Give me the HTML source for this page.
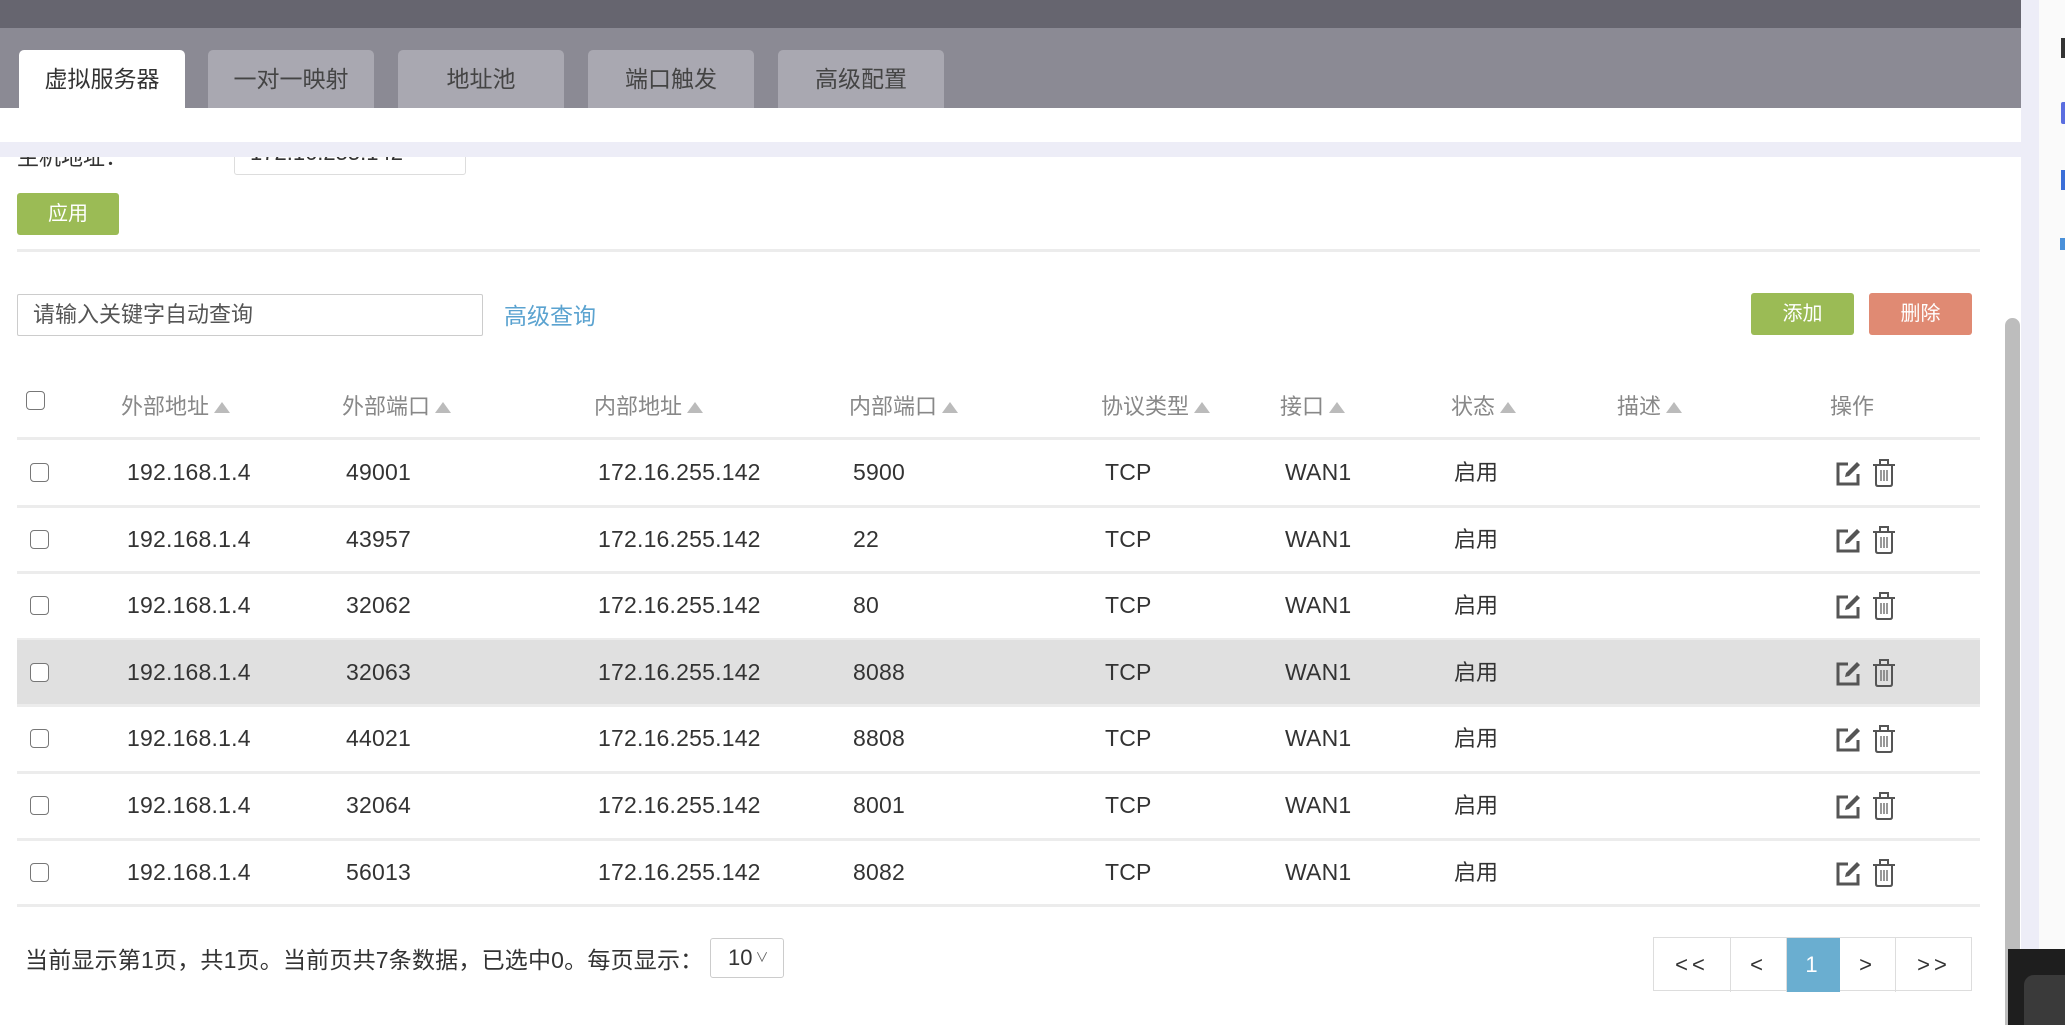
<!DOCTYPE html>
<html><head><meta charset="utf-8"><style>
*{margin:0;padding:0;box-sizing:border-box}
body{width:2065px;height:1025px;overflow:hidden;background:#fff;position:relative;font-family:"Liberation Sans","Noto Sans CJK SC",sans-serif;color:#333}
.a{position:absolute}
.tab{position:absolute;top:50px;height:58px;width:166px;background:#a9a8b1;border-radius:5px 5px 0 0;font-size:23px;color:#444;text-align:center;line-height:58px}
.t{position:absolute;font-size:22px;white-space:nowrap}
.h{color:#888;font-size:22px}
.tri{display:inline-block;width:0;height:0;border-left:8px solid transparent;border-right:8px solid transparent;border-bottom:11px solid #bbb;margin-left:5px;vertical-align:1px}
.cb{position:absolute;width:19px;height:19px;border:1.5px solid #777;border-radius:4px;background:#fff}
.line{position:absolute;left:17px;width:1963px;height:3px;background:#ececec}
.pg{position:absolute;top:0;height:54px;border-right:1px solid #ddd;text-align:center;line-height:54px;font-size:22px;color:#333;letter-spacing:4px}
</style></head><body>
<div class="a" style="left:0;top:0;width:2021px;height:28px;background:#66656f"></div>
<div class="a" style="left:0;top:28px;width:2021px;height:80px;background:#8b8a94"></div>
<div class="tab" style="left:19px;background:#fff;color:#333">虚拟服务器</div>
<div class="tab" style="left:208px">一对一映射</div>
<div class="tab" style="left:398px">地址池</div>
<div class="tab" style="left:588px">端口触发</div>
<div class="tab" style="left:778px">高级配置</div>

<div class="t" style="left:17px;top:140px;color:#333">主机地址：</div>
<div class="t" style="left:152px;top:140px;color:#c00">*</div>
<div class="a" style="left:234px;top:130px;width:232px;height:45px;border:1px solid #ddd;border-radius:3px;background:#fff"></div>
<div class="t" style="left:250px;top:140px;">172.16.255.142</div>
<div class="a" style="left:0;top:108px;width:2021px;height:34px;background:#fff"></div>
<div class="a" style="left:0;top:142px;width:2021px;height:15px;background:#ededf7"></div>

<div class="a" style="left:17px;top:193px;width:102px;height:42px;background:#9bbb55;border-radius:3px;color:#fff;font-size:20px;text-align:center;line-height:42px">应用</div>
<div class="line" style="top:249px"></div>

<div class="a" style="left:17px;top:294px;width:466px;height:42px;border:1px solid #ccc;border-radius:2px;font-size:22px;color:#555;line-height:40px;padding-left:15px">请输入关键字自动查询</div>
<div class="t" style="left:504px;top:297px;color:#5ba3d0;font-size:23px">高级查询</div>
<div class="a" style="left:1751px;top:293px;width:103px;height:42px;background:#9bbb55;border-radius:3px;color:#fff;font-size:20px;text-align:center;line-height:42px">添加</div>
<div class="a" style="left:1869px;top:293px;width:103px;height:42px;background:#e08a73;border-radius:3px;color:#fff;font-size:20px;text-align:center;line-height:42px">删除</div>

<div class="cb" style="left:26px;top:391px"></div>
<div class="t h" style="left:121px;top:389px">外部地址<span class="tri"></span></div>
<div class="t h" style="left:342px;top:389px">外部端口<span class="tri"></span></div>
<div class="t h" style="left:594px;top:389px">内部地址<span class="tri"></span></div>
<div class="t h" style="left:849px;top:389px">内部端口<span class="tri"></span></div>
<div class="t h" style="left:1101px;top:389px">协议类型<span class="tri"></span></div>
<div class="t h" style="left:1280px;top:389px">接口<span class="tri"></span></div>
<div class="t h" style="left:1451px;top:389px">状态<span class="tri"></span></div>
<div class="t h" style="left:1617px;top:389px">描述<span class="tri"></span></div>
<div class="t h" style="left:1830px;top:389px">操作</div>
<div class="line" style="top:437px"></div>

<div id="rows"></div>
<script>
var d=[["49001","5900"],["43957","22"],["32062","80"],["32063","8088"],["44021","8808"],["32064","8001"],["56013","8082"]];
var h="";
for(var i=0;i<7;i++){var y=440+i*66.6;var c=y+33;
if(i==3)h+='<div class="a" style="left:17px;top:'+(y)+'px;width:1963px;height:66px;background:#e0e0e0"></div>';
h+='<div class="cb" style="left:30px;top:'+(c-10)+'px"></div>';
var cols=[[127,"192.168.1.4"],[346,d[i][0]],[598,"172.16.255.142"],[853,d[i][1]],[1105,"TCP"],[1285,"WAN1"]];
for(var j=0;j<cols.length;j++)h+='<div class="t" style="left:'+cols[j][0]+'px;top:'+(c-14)+'px;font-size:23px;letter-spacing:0.2px">'+cols[j][1]+'</div>';
h+='<div class="t" style="left:1454px;top:'+(c-18)+'px;font-size:22px">启用</div>';
h+='<svg class="a" style="left:1834px;top:'+(c-13)+'px" width="28" height="28" viewBox="0 0 28 28"><path d="M14 4H4v20h20V14" fill="none" stroke="#555" stroke-width="3"/><path d="M11 17l1-4 11-11 3 3-11 11z" fill="#555"/></svg>';
h+='<svg class="a" style="left:1871px;top:'+(c-15)+'px" width="26" height="30" viewBox="0 0 26 30"><path d="M9 6V2h8v4M2 7h22M5 7v19q0 2 2 2h12q2 0 2-2V7" fill="none" stroke="#555" stroke-width="2"/><path d="M10 12v11M13 12v11M16 12v11" stroke="#777" stroke-width="1.5"/></svg>';
h+='<div class="line" style="top:'+(y+64.5)+'px"></div>';}
document.getElementById("rows").innerHTML=h;
</script>

<div class="t" style="left:25px;top:941px;font-size:23px;letter-spacing:0.2px">当前显示第1页，共1页。当前页共7条数据，已选中0。每页显示：</div>
<div class="a" style="left:710px;top:938px;width:74px;height:40px;border:1px solid #ccc;border-radius:3px;font-size:22px;line-height:38px;padding-left:17px">10<span style="font-size:13px;color:#666;margin-left:3px;vertical-align:3px">∨</span></div>

<div class="a" style="left:1653px;top:937px;width:319px;height:54px;border:1px solid #ddd;background:#fff">
<div class="pg" style="left:0;width:77px">&lt;&lt;</div>
<div class="pg" style="left:77px;width:56px">&lt;</div>
<div class="pg" style="left:133px;width:53px;background:#6aaed0;color:#fff;border:none">1</div>
<div class="pg" style="left:186px;width:56px">&gt;</div>
<div class="pg" style="left:242px;width:76px;border:none">&gt;&gt;</div>
</div>

<div class="a" style="left:2021px;top:0;width:18px;height:1025px;background:#ededf7"></div>
<div class="a" style="left:2039px;top:0;width:26px;height:1025px;background:#fafafa"></div>
<div class="a" style="left:2005px;top:318px;width:15px;height:707px;background:#bdbdbd;border-radius:8px 8px 0 0"></div>
<div class="a" style="left:2061px;top:38px;width:4px;height:20px;background:#333"></div>
<div class="a" style="left:2061px;top:102px;width:4px;height:22px;background:#5b6ee0;border-radius:2px 0 0 2px"></div>
<div class="a" style="left:2061px;top:170px;width:4px;height:20px;background:#3b6fd8"></div>
<div class="a" style="left:2060px;top:238px;width:5px;height:12px;background:#4a90d9"></div>
<div class="a" style="left:2008px;top:949px;width:57px;height:76px;background:#1e1e1e"></div>
<div class="a" style="left:2024px;top:975px;width:41px;height:50px;background:#3a3a3a;border-radius:10px 0 0 0"></div>
</body></html>
